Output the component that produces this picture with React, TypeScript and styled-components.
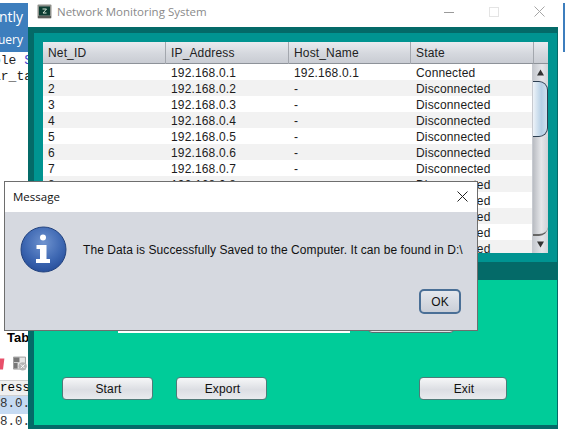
import React from 'react';
import styled, { createGlobalStyle } from 'styled-components';

const GlobalStyle = createGlobalStyle`
  html, body {
    margin: 0;
    padding: 0;
    background: #fff;
  }
  * { box-sizing: border-box; }
`;

const Desktop = styled.div`
  position: relative;
  width: 565px;
  height: 429px;
  overflow: hidden;
  background: #fff;
  font-family: "Liberation Sans", Arial, sans-serif;
`;

/* editor window peeking out behind the app */
const BackApp = styled.div`
  position: absolute;
  left: 0;
  top: 0;
  width: 28px;
  height: 429px;
  overflow: hidden;
  display: flex;
  flex-direction: column;
  background: #fff;
`;

const BackHeader = styled.div`
  margin-top: 3px;
  height: 49px;
  flex: none;
  background: #3d7ebd;
  color: #fff;
  font-family: "Open Sans", sans-serif;
  display: flex;
  flex-direction: column;
  align-items: flex-end;
  padding-right: 5px;
  white-space: nowrap;
`;

const BackTitle = styled.div`
  font-size: 14px;
  line-height: 20px;
  margin-top: 4px;
`;

const BackSub = styled.div`
  font-size: 12px;
  line-height: 16px;
  margin-top: 5px;
`;

const BackCode = styled.div`
  margin-top: 1px;
  flex: none;
`;

const CodeLine = styled.div`
  font-family: "Liberation Mono", monospace;
  font-size: 13px;
  line-height: 16px;
  color: #222;
  white-space: nowrap;
  margin-left: -7px;
  span { color: #3b3bd0; }
`;

const BackLower = styled.div`
  margin-top: 246px;
  flex: none;
  display: flex;
  flex-direction: column;
`;

const BackTab = styled.div`
  font-weight: 700;
  font-size: 13px;
  line-height: 14px;
  padding-left: 7px;
  white-space: nowrap;
  height: 16px;
`;

const BackTools = styled.div`
  height: 33px;
  display: flex;
  align-items: center;
  gap: 7px;
  margin-left: -3px;
`;

const BackHeadCell = styled.div`
  height: 16px;
  background: #f0f0f0;
  border-top: 1px solid #d0d0d0;
  border-bottom: 1px solid #d0d0d0;
  font-family: "Liberation Mono", monospace;
  font-size: 12.5px;
  line-height: 14px;
  white-space: nowrap;
  overflow: hidden;
`;

const BackCell = styled.div<{ $selected?: boolean }>`
  height: 18px;
  background: ${p => (p.$selected ? '#c5daf2' : '#fff')};
  font-family: "Liberation Mono", monospace;
  font-size: 12.5px;
  line-height: 17px;
  color: #333;
  white-space: nowrap;
`;

const RightEdge = styled.div`
  position: absolute;
  left: 563px;
  top: 3px;
  width: 2px;
  height: 49px;
  background: #3d7ebd;
`;

/* the java frame */
const AppWindow = styled.div`
  position: absolute;
  left: 28px;
  top: 0;
  width: 530px;
  height: 429px;
  display: flex;
  flex-direction: column;
  background: #fff;
`;

const TitleBar = styled.div`
  height: 27px;
  flex: none;
  display: flex;
  align-items: center;
  padding: 0 0 4px 9px;
  background: #fff;
`;

const TitleText = styled.div`
  margin-left: 5px;
  font-family: "Open Sans", sans-serif;
  font-size: 11.5px;
  color: #8a8a8a;
`;

const WinControls = styled.div`
  margin-left: auto;
  display: flex;
  align-items: center;
  height: 100%;
  padding-right: 13px;
  gap: 35px;
`;

const Frame = styled.div`
  flex: 1;
  display: flex;
  flex-direction: column;
  background: #046a68;
  padding: 6px 1px 4px 6px;
`;

const TablePanel = styled.div`
  height: 229px;
  flex: none;
  background: #009491;
  padding: 9px;
`;

const TableBox = styled.div`
  height: 211px;
  display: grid;
  grid-template-columns: 1fr 15px;
  grid-template-rows: 22px 189px;
  background: #fff;
  overflow: hidden;
`;

const HeaderRow = styled.div`
  display: grid;
  grid-template-columns: 123px 123px 122px 122px;
  background: linear-gradient(#e9ebef, #d5d8de 55%, #c9ccd3);
  border-bottom: 1px solid #8d9299;
`;

const HeaderCell = styled.div`
  font-size: 12px;
  line-height: 22px;
  padding-left: 5px;
  letter-spacing: 0.15px;
  color: #222;
  border-right: 1px solid #a3a7ae;
  &:last-child { border-right: none; }
`;

const HeaderCorner = styled.div`
  background: linear-gradient(#e9ebef, #d5d8de 55%, #c9ccd3);
  border-left: 1px solid #a3a7ae;
  border-bottom: 1px solid #8d9299;
`;

const Rows = styled.div`
  overflow: hidden;
  border-right: 1px solid #c7cad0;
`;

const Row = styled.div`
  display: grid;
  grid-template-columns: 123px 123px 122px 122px;
  height: 16px;
  &:nth-child(even) { background: #f2f2f2; }
`;

const Cell = styled.div`
  font-size: 12px;
  line-height: 18px;
  padding-left: 5px;
  letter-spacing: 0.15px;
  color: #1c1c1c;
  white-space: nowrap;
`;

const ScrollBar = styled.div`
  display: flex;
  flex-direction: column;
  background: linear-gradient(90deg, #c6c9cf, #e4e6ea 60%, #d3d5da);
`;

const ScrollArrow = styled.div`
  height: 17px;
  flex: none;
  display: flex;
  align-items: center;
  justify-content: center;
`;

const ScrollTrack = styled.div`
  flex: 1;
  background: linear-gradient(90deg, #b9bcc2, #e6e7ea 55%, #cfd1d6);
  border-bottom-right-radius: 9px;
  border-bottom: 2px solid #666;
`;

const ScrollThumb = styled.div`
  height: 56px;
  flex: none;
  background: linear-gradient(90deg, #eef3f8, #b6d0e6 60%, #cfe0ef);
  border: 1px solid #2c3e50;
  border-left: none;
  border-radius: 0 9px 9px 0;
`;

const ActionPanel = styled.div`
  margin-top: 18px;
  flex: 1;
  background: #00cc99;
  display: flex;
  flex-direction: column;
`;

const InputRow = styled.div`
  margin-top: 27px;
  height: 26px;
  display: flex;
  padding-left: 84px;
  gap: 18px;
`;

const TextInput = styled.div`
  width: 232px;
  background: #fff;
`;

const SmallButton = styled.div`
  width: 86px;
  background: #e0e2e6;
  border: 1px solid #5a6b70;
  border-radius: 4px;
`;

const ButtonRow = styled.div`
  margin-top: 44px;
  display: flex;
  padding: 0 50px 0 28px;
  gap: 23px;
`;

const ActionButton = styled.button<{ $push?: boolean; $w: number }>`
  width: ${p => p.$w}px;
  height: 23px;
  margin-left: ${p => (p.$push ? 'auto' : '0')};
  padding: 0 0 0 2px;
  font-family: "Liberation Sans", sans-serif;
  font-size: 12px;
  letter-spacing: 0.15px;
  color: #111;
  background: linear-gradient(#f6f7f8, #dcdee3 55%, #e9ebee);
  border: 1px solid #4f7a78;
  border-radius: 4px;
`;

/* message box on top */
const Dialog = styled.div`
  position: absolute;
  left: 4px;
  top: 181px;
  width: 474px;
  height: 150px;
  display: flex;
  flex-direction: column;
  background: #d6d9e0;
  border: 1px solid #6e6e6e;
`;

const DialogTitle = styled.div`
  height: 30px;
  flex: none;
  display: flex;
  align-items: center;
  justify-content: space-between;
  background: #fff;
  padding: 0 9px 2px 8px;
  font-family: "Open Sans", sans-serif;
  font-size: 11.5px;
  color: #111;
`;

const DialogBody = styled.div`
  flex: 1;
  display: flex;
  flex-direction: column;
  padding: 14px 16px 16px 15px;
`;

const MessageRow = styled.div`
  display: flex;
  align-items: center;
  gap: 16px;
  svg { flex: none; }
`;

const MessageText = styled.div`
  font-size: 12px;
  letter-spacing: 0.07px;
  color: #111;
  white-space: nowrap;
`;

const DialogFooter = styled.div`
  margin-top: auto;
  display: flex;
  justify-content: flex-end;
`;

const OkButton = styled.button`
  width: 42px;
  height: 25px;
  padding: 0;
  font-family: "Liberation Sans", sans-serif;
  font-size: 12px;
  color: #111;
  background: linear-gradient(#e4e7ec, #c9ced7);
  border: 2px solid #4a6f96;
  border-radius: 5px;
`;

const rows: [string, string, string, string][] = [
  ['1', '192.168.0.1', '192.168.0.1', 'Connected'],
  ...Array.from({ length: 11 }, (_, i): [string, string, string, string] => [
    String(i + 2),
    `192.168.0.${i + 2}`,
    '-',
    'Disconnected',
  ]),
];

const AppIcon = () => (
  <svg width="15" height="15" viewBox="0 0 15 15">
    <rect x="0.5" y="0.5" width="14" height="14" rx="1" fill="#8f918c" />
    <rect x="2" y="2.5" width="11" height="9" fill="#0d3d32" />
    <path d="M5.5 5h4L6 9h3.5" stroke="#d6e8d8" strokeWidth="1" fill="none" />
    <rect x="1" y="12" width="13" height="2" fill="#5c5e5a" />
  </svg>
);

const InfoIcon = () => (
  <svg width="47" height="47" viewBox="0 0 47 47">
    <defs>
      <radialGradient id="infoFill" cx="0.5" cy="0.35" r="0.7">
        <stop offset="0" stopColor="#6f93cf" />
        <stop offset="0.6" stopColor="#3d67b2" />
        <stop offset="1" stopColor="#234a96" />
      </radialGradient>
    </defs>
    <circle cx="23.5" cy="23.5" r="22.5" fill="url(#infoFill)" stroke="#23437f" />
    <circle cx="23" cy="11.5" r="3" fill="#fff" />
    <path d="M16.5 19h10v14h3.5v4h-14v-4h4v-10h-3.500z" fill="#fff" />
  </svg>
);

const App = () => (
  <>
    <GlobalStyle />
    <Desktop>
      <BackApp>
        <BackHeader>
          <BackTitle>ntly</BackTitle>
          <BackSub>uery</BackSub>
        </BackHeader>
        <BackCode>
          <CodeLine>ole <span>S</span></CodeLine>
          <CodeLine>ar_ta</CodeLine>
        </BackCode>
        <BackLower>
          <BackTab>Tab</BackTab>
          <BackTools>
            <svg width="10" height="15" viewBox="0 0 10 15">
              <path d="M0 2h8l-1.500 12H1z" fill="#e8506a" />
            </svg>
            <svg width="16" height="16" viewBox="0 0 16 16">
              <path d="M0.500 0.500h13v13h-13z" fill="#e6e6e6" stroke="#999" />
              <path d="M1 1h6v5H1zM1 7h4v6H1z" fill="#777" />
              <circle cx="10.500" cy="10.500" r="4.500" fill="#b5b5b5" />
              <path d="M8.500 8.500l4 4M12.500 8.500l-4 4" stroke="#fff" />
            </svg>
          </BackTools>
          <BackHeadCell>ress</BackHeadCell>
          <BackCell $selected>8.0.1</BackCell>
          <BackCell>8.0.1</BackCell>
        </BackLower>
      </BackApp>
      <RightEdge />

      <AppWindow>
        <TitleBar>
          <AppIcon />
          <TitleText>Network Monitoring System</TitleText>
          <WinControls>
            <svg width="10" height="10" viewBox="0 0 10 10">
              <path d="M0 5.500h10" stroke="#9a9a9a" />
            </svg>
            <svg width="10" height="10" viewBox="0 0 10 10">
              <rect x="0.500" y="0.500" width="9" height="9" fill="none" stroke="#e4e4e4" />
            </svg>
            <svg width="11" height="11" viewBox="0 0 11 11">
              <path d="M0.500 0.500l10 10M10.500 0.500l-10 10" stroke="#a6a6a6" />
            </svg>
          </WinControls>
        </TitleBar>
        <Frame>
          <TablePanel>
            <TableBox>
              <HeaderRow>
                <HeaderCell>Net_ID</HeaderCell>
                <HeaderCell>IP_Address</HeaderCell>
                <HeaderCell>Host_Name</HeaderCell>
                <HeaderCell>State</HeaderCell>
              </HeaderRow>
              <HeaderCorner />
              <Rows>
                {rows.map(r => (
                  <Row key={r[0]}>
                    {r.map((c, i) => (
                      <Cell key={i}>{c}</Cell>
                    ))}
                  </Row>
                ))}
              </Rows>
              <ScrollBar>
                <ScrollArrow>
                  <svg width="7" height="7" viewBox="0 0 7 7">
                    <path d="M3.500 0.500L7 6.500H0z" fill="#333" />
                  </svg>
                </ScrollArrow>
                <ScrollThumb />
                <ScrollTrack />
                <ScrollArrow>
                  <svg width="7" height="7" viewBox="0 0 7 7">
                    <path d="M3.500 6.500L7 0.500H0z" fill="#333" />
                  </svg>
                </ScrollArrow>
              </ScrollBar>
            </TableBox>
          </TablePanel>
          <ActionPanel>
            <InputRow>
              <TextInput />
              <SmallButton />
            </InputRow>
            <ButtonRow>
              <ActionButton $w={91}>Start</ActionButton>
              <ActionButton $w={91}>Export</ActionButton>
              <ActionButton $w={88} $push>Exit</ActionButton>
            </ButtonRow>
          </ActionPanel>
        </Frame>
      </AppWindow>

      <Dialog>
        <DialogTitle>
          <span>Message</span>
          <svg width="11" height="11" viewBox="0 0 11 11">
            <path d="M0.500 0.500l10 10M10.500 0.500l-10 10" stroke="#222" />
          </svg>
        </DialogTitle>
        <DialogBody>
          <MessageRow>
            <InfoIcon />
            <MessageText>The Data is Successfully Saved to the Computer. It can be found in D:\</MessageText>
          </MessageRow>
          <DialogFooter>
            <OkButton>OK</OkButton>
          </DialogFooter>
        </DialogBody>
      </Dialog>
    </Desktop>
  </>
);

export default App;
